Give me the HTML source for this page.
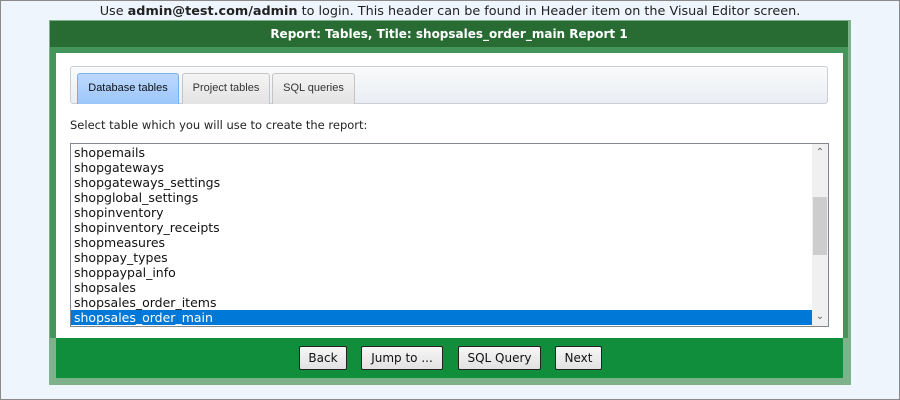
<!DOCTYPE html>
<html><head><style>
*{box-sizing:border-box;margin:0;padding:0}
body{width:900px;height:400px;overflow:hidden;background:#eef5fd;font-family:"DejaVu Sans",Verdana,sans-serif;position:relative}
.frame{position:absolute;left:0;top:0;width:900px;height:400px;border:1px solid #8a8a8a}
.top{position:absolute;left:0;top:4px;width:900px;text-align:center;font-size:12.8px;color:#222}
.panel{position:absolute;left:49px;top:20px;width:802px;height:365px;background:#7eb28a}
.hdr{position:absolute;left:50px;top:21px;width:798px;height:26px;background:#286c34;color:#fff;font-weight:bold;font-size:12px;text-align:center;line-height:26px}
.inner{position:absolute;left:50px;top:47px;width:798px;height:291px;background:#44955a}
.white{position:absolute;left:56px;top:53px;width:787px;height:285px;background:#fff}
.tabs{position:absolute;left:70px;top:66px;width:758px;height:38px;border:1px solid #c9ced6;border-radius:3px;background:linear-gradient(#fafbfc,#e9edf2)}
.tab{position:absolute;top:6px;height:31px;border:1px solid #c4c4c4;border-bottom:none;border-radius:3px 3px 0 0;background:linear-gradient(#f4f4f4,#e3e3e3);font-size:11px;color:#333;text-align:center;line-height:29px;font-family:"Liberation Sans",Arial,sans-serif}
.tab.a{background:linear-gradient(#bcd9ff,#9cc6fa);border-color:#7aaee6;color:#111}
.lbl{position:absolute;left:70px;top:118px;font-size:11.5px;color:#222}
.list{position:absolute;left:70px;top:143px;width:759px;height:184px;border:1px solid #828790;background:#fff;overflow:hidden}
.list .it{height:15px;line-height:15px;font-size:12.5px;padding-left:3px;color:#111;white-space:nowrap}
.list .sel{background:#0078d7;color:#fff;width:741px}
.sb{position:absolute;right:0;top:0;width:16px;height:182px;background:#f0f0f0}
.thumb{position:absolute;left:1px;top:53px;width:14px;height:58px;background:#cdcdcd}
.ar{position:absolute;left:0;width:16px;height:14px;text-align:center;font-size:10px;line-height:14px;color:#606060}
.bar{position:absolute;left:56px;top:338px;width:787px;height:40px;background:#118e3c}
.btn{position:absolute;top:346px;height:24px;border:1px solid #222;border-radius:2px;background:linear-gradient(#f6f6f6,#e2e2e2);font-size:12px;text-align:center;line-height:22px;color:#111}
</style></head><body>
<div class="frame"></div>
<div class="top">Use <b>admin@test.com/admin</b> to login. This header can be found in Header item on the Visual Editor screen.</div>
<div class="panel"></div>
<div class="hdr">Report: Tables, Title: shopsales_order_main Report 1</div>
<div class="inner"></div>
<div class="white"></div>
<div class="tabs">
<div class="tab a" style="left:6px;width:102px">Database tables</div>
<div class="tab" style="left:111px;width:88px">Project tables</div>
<div class="tab" style="left:201px;width:83px">SQL queries</div>
</div>
<div class="lbl">Select table which you will use to create the report:</div>
<div class="list">
<div class="it" style="margin-top:1px">shopemails</div><div class="it">shopgateways</div><div class="it">shopgateways_settings</div><div class="it">shopglobal_settings</div><div class="it">shopinventory</div><div class="it">shopinventory_receipts</div><div class="it">shopmeasures</div><div class="it">shoppay_types</div><div class="it">shoppaypal_info</div><div class="it">shopsales</div><div class="it">shopsales_order_items</div><div class="it sel">shopsales_order_main</div>
<div class="sb"><div class="thumb"></div><div class="ar" style="top:2px">&#8963;</div><div class="ar" style="top:166px">&#8964;</div></div>
</div>
<div class="bar"></div>
<div class="btn" style="left:299px;width:48px">Back</div>
<div class="btn" style="left:361px;width:82px">Jump to ...</div>
<div class="btn" style="left:458px;width:83px">SQL Query</div>
<div class="btn" style="left:555px;width:47px">Next</div>
</body></html>
